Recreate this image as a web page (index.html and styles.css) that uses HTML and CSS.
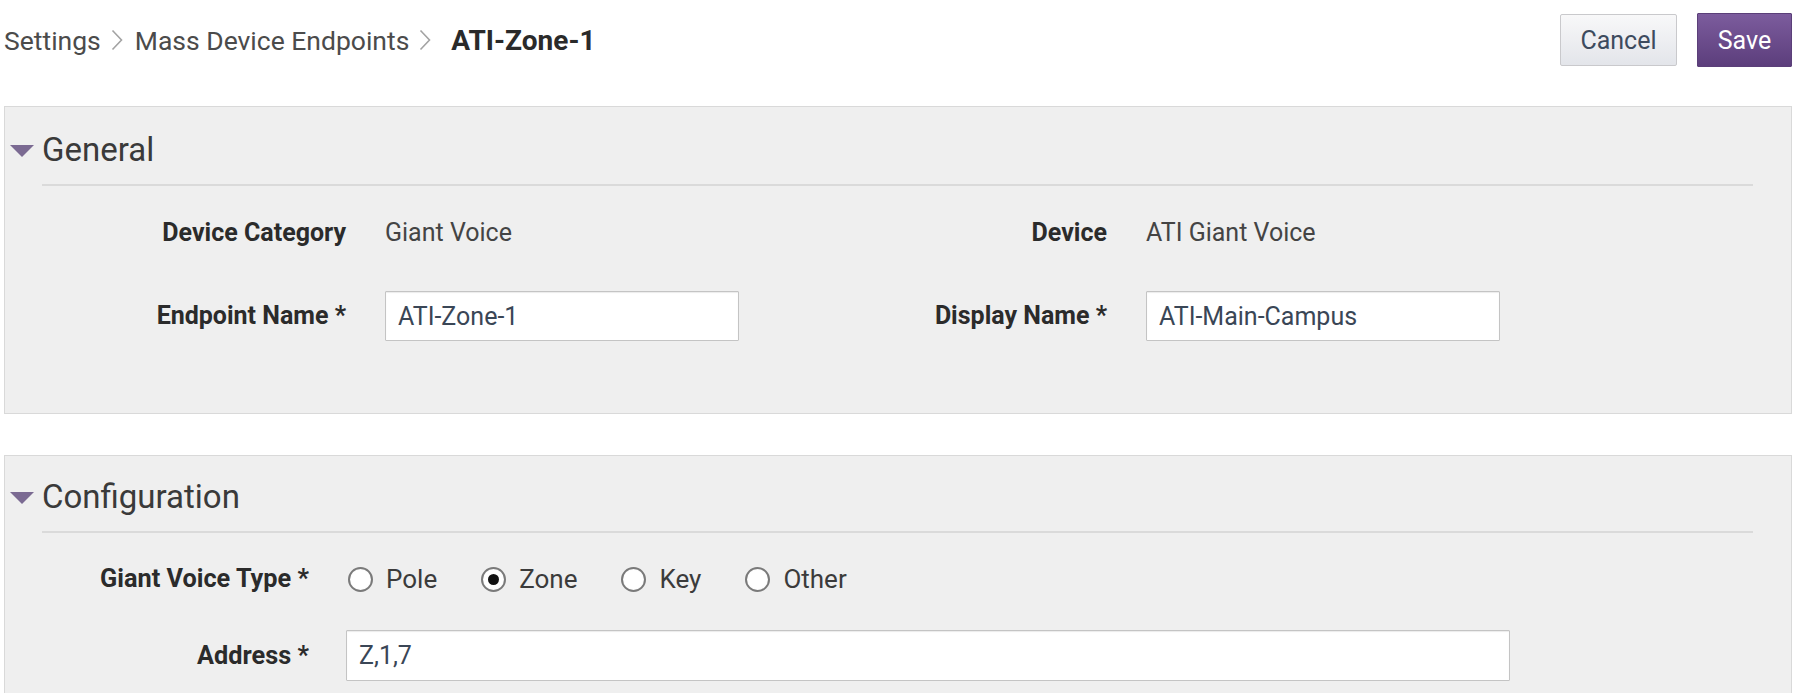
FILE: index.html
```html
<!DOCTYPE html>
<html lang="en">
<head>
<meta charset="utf-8">
<title>ATI-Zone-1</title>
<link rel="stylesheet" href="styles.css">
</head>
<body>
<header class="topbar">
  <nav class="crumbs">
    <span class="crumb">Settings</span>
    <svg class="chev" viewBox="0 0 12 22" width="12" height="22"><polyline points="1.5,1.5 10.5,11 1.5,20.5" fill="none" stroke="#a3a3a3" stroke-width="1.6"/></svg>
    <span class="crumb">Mass Device Endpoints</span>
    <svg class="chev" viewBox="0 0 12 22" width="12" height="22"><polyline points="1.5,1.5 10.5,11 1.5,20.5" fill="none" stroke="#a3a3a3" stroke-width="1.6"/></svg>
    <span class="crumb current">ATI-Zone-1</span>
  </nav>
  <div class="actions">
    <button class="btn btn-cancel">Cancel</button>
    <button class="btn btn-save">Save</button>
  </div>
</header>

<section class="panel panel-general">
  <h2 class="panel-title"><span class="caret"></span>General</h2>
  <div class="divider"></div>
  <div class="grid-general">
    <div class="label">Device Category</div>
    <div class="value">Giant Voice</div>
    <div class="label">Device</div>
    <div class="value">ATI Giant Voice</div>

    <div class="label">Endpoint Name *</div>
    <div class="value"><input class="field field-short" type="text" value="ATI-Zone-1"></div>
    <div class="label">Display Name *</div>
    <div class="value"><input class="field field-short" type="text" value="ATI-Main-Campus"></div>
  </div>
</section>

<section class="panel panel-config">
  <h2 class="panel-title"><span class="caret"></span>Configuration</h2>
  <div class="divider"></div>
  <div class="grid-config">
    <div class="label">Giant Voice Type *</div>
    <div class="radios">
      <label class="radio-item"><input type="radio" name="gvt"><span>Pole</span></label>
      <label class="radio-item"><input type="radio" name="gvt" checked><span>Zone</span></label>
      <label class="radio-item"><input type="radio" name="gvt"><span>Key</span></label>
      <label class="radio-item"><input type="radio" name="gvt"><span>Other</span></label>
    </div>
    <div class="label">Address *</div>
    <div class="value"><input class="field field-long" type="text" value="Z,1,7"></div>
  </div>
</section>
</body>
</html>
```

FILE: styles.css
```css
* { box-sizing: border-box; }

html, body {
  margin: 0;
  padding: 0;
  background: #ffffff;
  font-family: Roboto, "Liberation Sans", sans-serif;
  color: #3c3c3c;
  overflow: hidden;
}

.topbar {
  display: flex;
  justify-content: space-between;
  align-items: center;
  height: 52px;
  margin-top: 14px;
  padding: 0 8px 0 4px;
}

.crumbs {
  display: flex;
  align-items: center;
  font-size: 26.5px;
  color: #4b4b4b;
}

.chev {
  margin: 0 12px 0 10px;
  display: block;
}

.crumb.current {
  font-weight: 700;
  font-size: 28px;
  color: #2a2a2a;
  margin-left: 8px;
}

.actions {
  display: flex;
  gap: 20px;
  align-items: center;
}

.btn {
  font-family: Roboto, "Liberation Sans", sans-serif;
  font-size: 25px;
  height: 52px;
  padding: 0;
  cursor: pointer;
}

.btn-cancel {
  width: 117px;
  color: #3d4b5e;
  background: linear-gradient(#f8f8f9, #e3e5ea);
  border: 1px solid #c9c9cc;
  border-radius: 2px;
}

.btn-save {
  width: 95px;
  height: 54px;
  color: #ffffff;
  background: linear-gradient(#7c5c9d, #5c3e7c);
  border: 1px solid #5b3f79;
  border-radius: 1px;
}

.panel {
  margin: 40px 8px 0 4px;
  background: #efefef;
  border: 1px solid #d9d9d9;
  padding: 22px 0 0 0;
}

.panel-general {
  padding-bottom: 72px;
}

.panel-config {
  margin-top: 41px;
  padding-top: 20px;
  padding-bottom: 40px;
}

.panel-title {
  display: flex;
  align-items: center;
  margin: 0;
  height: 40px;
  font-size: 33px;
  font-weight: 400;
  color: #3a3a3a;
}

.caret {
  width: 0;
  height: 0;
  border-left: 12px solid transparent;
  border-right: 12px solid transparent;
  border-top: 12px solid #7b6a92;
  margin: 4px 8px 0 5px;
}

.divider {
  height: 2px;
  background: #dadada;
  margin: 15px 38px 0 37px;
}

.grid-general {
  display: grid;
  grid-template-columns: 341px 380px 303px 1fr;
  column-gap: 39px;
  row-gap: 43px;
  align-items: center;
  margin-top: 32px;
}

.grid-config {
  display: grid;
  grid-template-columns: 304px 1fr;
  column-gap: 37px;
  row-gap: 36px;
  align-items: center;
  margin-top: 31px;
}

.label {
  text-align: right;
  font-weight: 700;
  font-size: 25px;
  color: #2b2b2b;
  line-height: 30px;
}

.grid-config .label {
  font-size: 25.3px;
}

.value {
  font-size: 25px;
  color: #444444;
  line-height: 30px;
}

.field {
  display: block;
  height: 50px;
  font-family: Roboto, "Liberation Sans", sans-serif;
  font-size: 25px;
  color: #3a4656;
  background: #ffffff;
  border: 1px solid #c4c4c4;
  box-shadow: inset 0 1px 1px rgba(0,0,0,0.08);
  padding: 0 12px;
  border-radius: 1px;
}

.field-short { width: 354px; }
.field-long { width: 1164px; height: 51px; }

.radios {
  display: flex;
  align-items: center;
  gap: 44px;
  height: 30px;
  padding-left: 2px;
}

.radio-item {
  display: flex;
  align-items: center;
  gap: 13px;
  font-size: 26px;
  color: #3b3b3b;
}

.radio-item input {
  appearance: none;
  -webkit-appearance: none;
  margin: 0;
  width: 25px;
  height: 25px;
  border-radius: 50%;
  border: 2px solid #7a7a7a;
  background: radial-gradient(circle, #ffffff 60%, #ececec 100%);
  display: grid;
  place-items: center;
}

.radio-item input:checked::after {
  content: "";
  width: 11px;
  height: 11px;
  border-radius: 50%;
  background: #111111;
}
```
